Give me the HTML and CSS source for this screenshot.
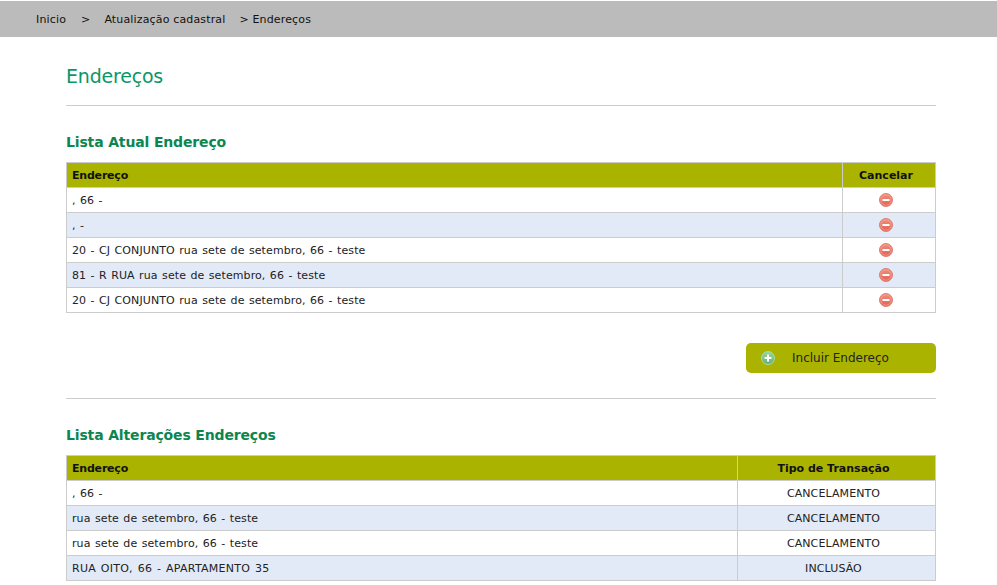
FILE: index.html
```html
<!DOCTYPE html>
<html lang="pt-BR">
<head>
    <meta charset="UTF-8">
    <title>Endereços</title>
    <link rel="stylesheet" href="styles.css">
</head>
<body>
    <svg class="icon-defs" width="0" height="0">
        <defs>
            <linearGradient id="redBall" x1="0" y1="0" x2="0" y2="1">
                <stop offset="0" stop-color="#f2907f"/>
                <stop offset="1" stop-color="#e25f52"/>
            </linearGradient>
            <linearGradient id="greenBall" x1="0" y1="0" x2="0" y2="1">
                <stop offset="0" stop-color="#9ad69a"/>
                <stop offset="1" stop-color="#62b070"/>
            </linearGradient>
            <symbol id="iconRemove" viewBox="0 0 14 14">
                <circle cx="7" cy="7" r="6.5" fill="url(#redBall)" stroke="#dc8074" stroke-width="1"/>
                <circle cx="7" cy="7" r="5.2" fill="none" stroke="#f4b0a4" stroke-width="0.6"/>
                <rect x="3.5" y="6" width="7" height="2" fill="#fff"/>
            </symbol>
            <symbol id="iconAdd" viewBox="0 0 14 14">
                <circle cx="7" cy="7" r="6.5" fill="url(#greenBall)" stroke="#a9d8a9" stroke-width="1"/>
                <path d="M6 3.5h2V6h2.5v2H8v2.5H6V8H3.5V6H6z" fill="#fff"/>
            </symbol>
        </defs>
    </svg>

    <div class="breadcrumb">
        <span class="crumb-home">Inicio</span>
        <span class="crumb-sep">&gt;</span>
        <span class="crumb-page">Atualização cadastral</span>
        <span>&gt; Endereços</span>
    </div>

    <div class="content">
        <h1>Endereços</h1>

        <h2>Lista Atual Endereço</h2>
        <table class="grid">
            <thead>
                <tr><th class="left">Endereço</th><th class="col-cancel">Cancelar</th></tr>
            </thead>
            <tbody>
                <tr><td>, 66 -</td><td class="center icon-cell"><svg class="icon"><use href="#iconRemove"/></svg></td></tr>
                <tr><td>, -</td><td class="center icon-cell"><svg class="icon"><use href="#iconRemove"/></svg></td></tr>
                <tr><td>20 - CJ CONJUNTO rua sete de setembro, 66 - teste</td><td class="center icon-cell"><svg class="icon"><use href="#iconRemove"/></svg></td></tr>
                <tr><td>81 - R RUA rua sete de setembro, 66 - teste</td><td class="center icon-cell"><svg class="icon"><use href="#iconRemove"/></svg></td></tr>
                <tr><td>20 - CJ CONJUNTO rua sete de setembro, 66 - teste</td><td class="center icon-cell"><svg class="icon"><use href="#iconRemove"/></svg></td></tr>
            </tbody>
        </table>

        <div class="actions">
            <button class="btn-add" type="button"><svg class="icon"><use href="#iconAdd"/></svg><span>Incluir Endereço</span></button>
        </div>

        <h2 class="section-line">Lista Alterações Endereços</h2>
        <table class="grid">
            <thead>
                <tr><th class="left">Endereço</th><th class="col-type">Tipo de Transação</th></tr>
            </thead>
            <tbody>
                <tr><td>, 66 -</td><td class="center">CANCELAMENTO</td></tr>
                <tr><td>rua sete de setembro, 66 - teste</td><td class="center">CANCELAMENTO</td></tr>
                <tr><td>rua sete de setembro, 66 - teste</td><td class="center">CANCELAMENTO</td></tr>
                <tr><td class="caps">RUA OITO, 66 - APARTAMENTO 35</td><td class="center">INCLUSÃO</td></tr>
            </tbody>
        </table>
    </div>
</body>
</html>
```

FILE: styles.css
```css
body {
    margin: 0;
    padding-top: 1px;
    background-color: #fff;
    color: #222;
    font-family: "DejaVu Sans", Verdana, sans-serif;
    font-size: 11px;
}
.icon-defs {
    position: absolute;
}
.breadcrumb {
    display: flex;
    align-items: center;
    height: 36px;
    padding-left: 36px;
    background-color: #bbb;
    color: #111;
    letter-spacing: 0.15px;
}
.crumb-sep {
    margin: 0 14px 0 15px;
}
.crumb-page {
    margin-right: 14px;
}
.content {
    margin: 0 61px 0 66px;
}
h1 {
    margin: 0;
    padding: 27px 0 17px;
    border-bottom: 1px solid #ccc;
    color: #0b9668;
    font-size: 19px;
    font-weight: normal;
    line-height: 24px;
    letter-spacing: -0.2px;
}
h2 {
    margin: 0;
    padding: 27px 0 11px;
    color: #0b8650;
    font-size: 14px;
    font-weight: bold;
    line-height: 18px;
    letter-spacing: -0.15px;
}
.section-line {
    border-top: 1px solid #ccc;
}
.grid {
    width: 100%;
    border-collapse: collapse;
    table-layout: fixed;
}
.grid th,
.grid td {
    height: 24px;
    padding: 0 5px;
    border: 1px solid #ccc;
    font-size: 11px;
    line-height: 14px;
}
.grid td {
    height: 22px;
    padding-top: 2px;
    letter-spacing: 0.1px;
    word-spacing: 0.8px;
}
.grid td.caps {
    letter-spacing: 0.25px;
    word-spacing: 1.1px;
}
.grid th {
    height: 23px;
    padding-top: 1px;
    padding-right: 11px;
    background-color: #aab400;
    color: #111;
    font-weight: bold;
    text-align: center;
}
.grid th.left {
    text-align: left;
    letter-spacing: -0.2px;
}
.grid tbody tr:nth-child(even) td {
    background-color: #e3eaf7;
}
.col-cancel {
    width: 76px;
}
.col-type {
    width: 181px;
}
.grid td.center {
    padding-top: 1px;
    padding-right: 11px;
    text-align: center;
}
.grid td.icon-cell {
    padding-top: 0;
    padding-bottom: 1px;
}
.icon {
    display: inline-block;
    width: 14px;
    height: 14px;
    vertical-align: middle;
}
.actions {
    display: flex;
    justify-content: flex-end;
    padding: 30px 0 25px;
}
.btn-add {
    display: flex;
    align-items: center;
    width: 190px;
    height: 30px;
    padding: 0 0 0 15px;
    border: none;
    border-radius: 5px;
    background-color: #aab400;
    color: #222;
    font-family: inherit;
    font-size: 12px;
}
.btn-add span {
    margin-left: 17px;
}
```
